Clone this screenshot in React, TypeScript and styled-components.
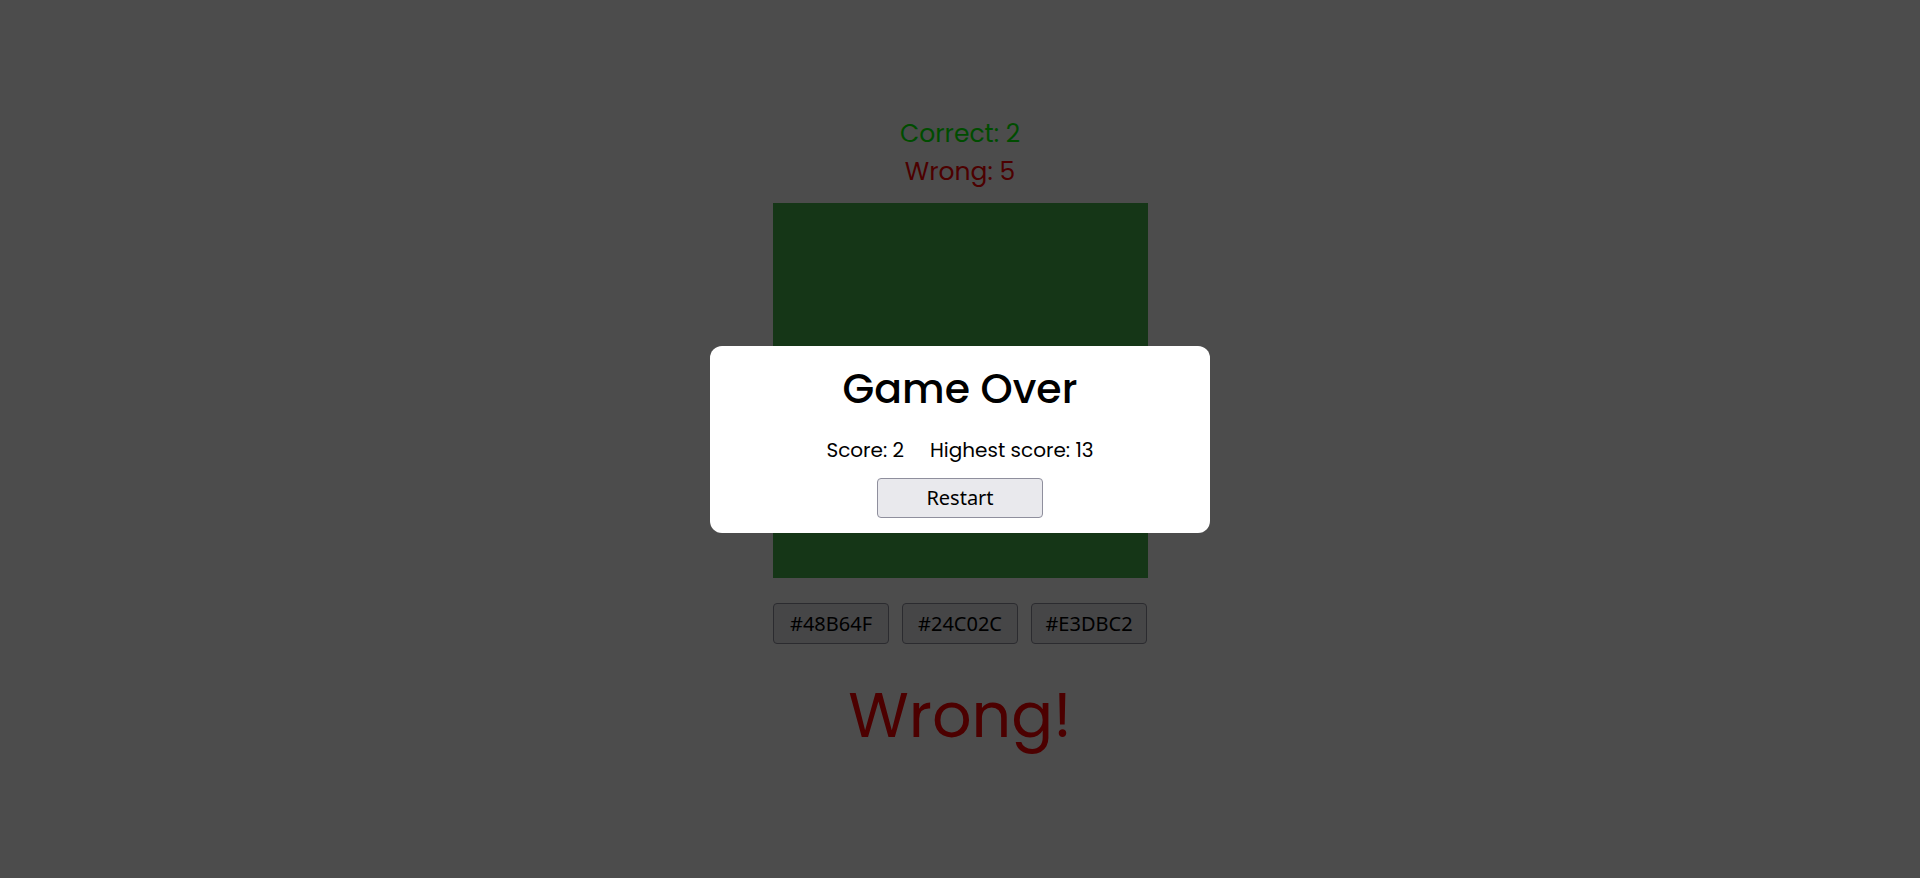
import React from "react";
import styled, { createGlobalStyle } from "styled-components";

const GlobalStyle = createGlobalStyle`
  html, body {
    margin: 0;
    padding: 0;
    background: #ffffff;
  }
  body {
    font-family: Poppins, Inter, "Noto Sans", sans-serif;
  }
`;

const Page = styled.main`
  min-height: 878px;
  display: flex;
  flex-direction: column;
  align-items: center;
  padding-top: 115px;
  box-sizing: border-box;
`;

const Counter = styled.div<{ $tone: "good" | "bad" }>`
  font-family: Poppins, Inter, sans-serif;
  font-size: 25px;
  line-height: 38px;
  color: ${(p) => (p.$tone === "good" ? "#00ff00" : "#ff0000")};
`;

const Swatch = styled.div<{ $color: string }>`
  width: 375px;
  height: 375px;
  margin-top: 12px;
  background: ${(p) => p.$color};
`;

const Options = styled.div`
  display: grid;
  grid-template-columns: repeat(3, 116px);
  gap: 13px;
  margin-top: 25px;
`;

const OptionButton = styled.button`
  height: 41px;
  padding: 0;
  font-family: "Noto Sans", "Open Sans", sans-serif;
  font-size: 20px;
  color: #000;
  background: #e9e9ed;
  border: 1px solid #8f8f9d;
  border-radius: 4px;
  cursor: pointer;
`;

const Verdict = styled.div`
  margin-top: 25px;
  font-family: Poppins, Inter, sans-serif;
  font-size: 62px;
  line-height: 94px;
  color: #ff0000;
`;

const Overlay = styled.div`
  position: fixed;
  inset: 0;
  background: rgba(0, 0, 0, 0.7);
  display: flex;
  align-items: center;
  justify-content: center;
`;

const Modal = styled.div`
  width: 500px;
  box-sizing: border-box;
  background: #fff;
  border-radius: 12px;
  padding: 19px 20px 15px;
  display: flex;
  flex-direction: column;
  align-items: center;
`;

const Title = styled.h2`
  margin: 0;
  font-family: Poppins, Inter, sans-serif;
  font-weight: 500;
  font-size: 41px;
  line-height: 48px;
  color: #000;
`;

const Scores = styled.div`
  margin-top: 22px;
  display: flex;
  gap: 26px;
  font-family: Poppins, Inter, sans-serif;
  font-size: 20px;
  line-height: 30px;
  color: #000;
`;

const RestartButton = styled.button`
  margin-top: 13px;
  width: 166px;
  height: 40px;
  font-family: "Noto Sans", "Open Sans", sans-serif;
  font-size: 20px;
  color: #000;
  background: #e9e9ed;
  border: 1px solid #8f8f9d;
  border-radius: 4px;
  cursor: pointer;
`;

const options = ["#48B64F", "#24C02C", "#E3DBC2"];

export default function App() {
  return (
    <>
      <GlobalStyle />
      <Page>
        <Counter $tone="good">Correct: 2</Counter>
        <Counter $tone="bad">Wrong: 5</Counter>
        <Swatch $color="#48B64F" />
        <Options>
          {options.map((o) => (
            <OptionButton key={o}>{o}</OptionButton>
          ))}
        </Options>
        <Verdict>Wrong!</Verdict>
      </Page>
      <Overlay>
        <Modal>
          <Title>Game Over</Title>
          <Scores>
            <span>Score: 2</span>
            <span>Highest score: 13</span>
          </Scores>
          <RestartButton>Restart</RestartButton>
        </Modal>
      </Overlay>
    </>
  );
}
